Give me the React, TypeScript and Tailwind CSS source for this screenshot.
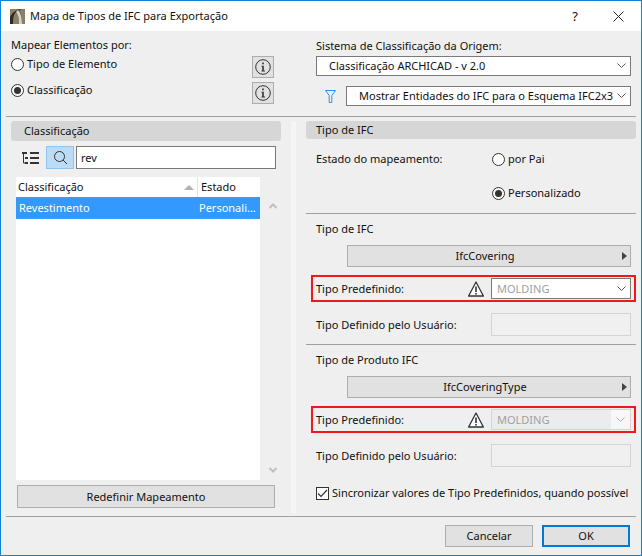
import { ReactNode } from 'react';

const Radio = ({ label, checked = false }: { label: string; checked?: boolean }) => (
  <div className="flex items-center h-[16px]">
    <span className="w-[13px] h-[13px] rounded-full border border-[#333] bg-white flex items-center justify-center shrink-0">
      {checked && <span className="w-[7px] h-[7px] rounded-full bg-[#333]" />}
    </span>
    <span className="ml-[3px]">{label}</span>
  </div>
);

const Chevron = ({ color = "#555" }: { color?: string }) => (
  <svg width="9" height="6" viewBox="0 0 9 6" className="shrink-0">
    <path d="M0.5 0.5 L4.5 4.5 L8.5 0.5" fill="none" stroke={color} strokeWidth="1" />
  </svg>
);

const Select = ({ children, className }: { children: ReactNode; className: string }) => (
  <div className={`flex items-center justify-between bg-white border border-[#7a7a7a] ${className}`}>
    {children}
    <span className="mr-[4px]"><Chevron /></span>
  </div>
);

const InfoButton = () => (
  <div className="w-[22px] h-[22px] border border-[#adadad] bg-[#e1e1e1] flex items-center justify-center">
    <svg width="16" height="16" viewBox="0 0 16 16">
      <circle cx="8" cy="8" r="7.3" fill="none" stroke="#333" strokeWidth="1" />
      <rect x="7.2" y="3.5" width="1.6" height="1.8" fill="#333" />
      <path d="M6.5 6.8 H8.8 V11.5 H10 V12.5 H6.5 V11.5 H7.2 V7.8 H6.5 Z" fill="#333" />
    </svg>
  </div>
);

const WideButton = ({ label }: { label: string }) => (
  <div className="ml-[41px] w-[284px] h-[22px] border border-[#adadad] bg-[#e1e1e1] flex items-center">
    <span className="flex-1 text-center">{label}</span>
    <span className="w-0 h-0 mr-[3px] border-y-[4px] border-y-transparent border-l-[5px] border-l-[#444]" />
  </div>
);

const Warning = () => (
  <svg width="16" height="16" viewBox="0 0 16 16" className="shrink-0">
    <path d="M8 1 L15.4 15 L0.6 15 Z" fill="#fff" stroke="#333" strokeWidth="1.3" strokeLinejoin="round" />
    <rect x="7.2" y="5.5" width="1.6" height="5.5" fill="#333" />
    <rect x="7.2" y="12" width="1.6" height="1.6" fill="#333" />
  </svg>
);

const Predefined = ({ disabled = false, className = "" }: { disabled?: boolean; className?: string }) => (
  <div className={`ml-[5px] w-[325px] h-[27px] border-2 border-[#f01818] flex items-center ${className}`}>
    <span className="ml-[3px] w-[152px] pt-[1px]">Tipo Predefinido:</span>
    <Warning />
    <div className={`ml-[7px] w-[140px] h-[21px] flex items-center justify-between ${disabled ? "border border-[#d4d4d4] bg-[#ececec]" : "border border-[#7a7a7a] bg-white"}`}>
      <span className="ml-[5px] text-[#a0a0a0]">MOLDING</span>
      {disabled
        ? <span className="w-[19px] h-full bg-[#f7f7f7] flex items-center justify-center"><Chevron color="#b0b0b0" /></span>
        : <span className="mr-[4px]"><Chevron /></span>}
    </div>
  </div>
);

const UserDefined = () => (
  <div className="ml-[10px] flex items-center h-[23px]">
    <span className="w-[175px]">Tipo Definido pelo Usuário:</span>
    <div className="w-[140px] h-[23px] border border-[#d4d4d4] bg-[#f0f0f0]" />
  </div>
);

const Separator = ({ className = "" }: { className?: string }) => <div className={`h-px bg-[#a0a0a0] ${className}`} />;

export default function App() {
  return (
    <div
      className="w-[642px] h-[556px] border border-[#0a84d8] bg-[#efefef] text-[#111] text-[11px] leading-[16px] flex flex-col overflow-hidden"
      style={{ fontFamily: '"Noto Sans", sans-serif' }}
    >
      <div className="h-[30px] bg-white flex items-center shrink-0">
        <svg width="15" height="15" viewBox="0 0 15 15" className="ml-[9px] shrink-0">
          <rect width="15" height="15" fill="#8a7f68" />
          <path d="M0 15 L0 8 C3 2 8 0 15 0 L8 0 C11 3 12 9 12 15 L9 15 C9 9 8 5 6 3 C3 6 3 11 3 15 Z" fill="#2f2a22" />
          <path d="M9 15 C9 9 8 5 6 3 L8 1 C11 4 12 9 12 15 Z" fill="#d8d2c0" />
        </svg>
        <span className="ml-[5px]">Mapa de Tipos de IFC para Exportação</span>
        <span className="ml-auto text-[13px] mr-[35px]">?</span>
        <svg width="11" height="11" viewBox="0 0 11 11" className="mr-[17px]">
          <path d="M0.5 0.5 L10.5 10.5 M10.5 0.5 L0.5 10.5" stroke="#222" strokeWidth="1" />
        </svg>
      </div>

      <div className="h-[85px] flex shrink-0">
        <div className="w-[305px] flex shrink-0">
          <div className="ml-[10px] w-[240px]">
            <div className="mt-[6px]">Mapear Elementos por:</div>
            <div className="mt-[3px]"><Radio label="Tipo de Elemento" /></div>
            <div className="mt-[10px]"><Radio label="Classificação" checked /></div>
          </div>
          <div className="ml-[1px] pt-[25px] flex flex-col gap-[4px]">
            <InfoButton />
            <InfoButton />
          </div>
        </div>
        <div className="flex-1 min-w-0">
          <div className="mt-[7px] ml-[10px]">Sistema de Classificação da Origem:</div>
          <Select className="mt-[2px] ml-[10px] w-[315px] h-[20px]"><span className="ml-[12px]">Classificação ARCHICAD - v 2.0</span></Select>
          <div className="mt-[10px] flex items-center">
            <svg width="11" height="13" viewBox="0 0 11 13" className="ml-[19px]">
              <path d="M0.5 0.5 H10.5 L6.8 5.5 V12.5 H4.2 V5.5 Z" fill="none" stroke="#2f8cf0" strokeWidth="1" />
            </svg>
            <Select className="ml-[10px] w-[285px] h-[20px]"><span className="ml-[12px] whitespace-nowrap">Mostrar Entidades do IFC para o Esquema IFC2x3</span></Select>
          </div>
        </div>
      </div>

      <Separator className="ml-[5px] mr-[5px] shrink-0" />

      <div className="h-[399px] flex shrink-0">
        <div className="w-[290px] shrink-0 pt-[4px]">
          <div className="ml-[10px] w-[270px] h-[20px] rounded-[3px] bg-[#d6d6d6] pl-[13px] flex items-center">Classificação</div>
          <div className="mt-[5px] ml-[10px] flex items-center">
            <svg width="17" height="12" viewBox="0 0 17 12" className="ml-[11px]">
              <path d="M0 1 H5 M8 1 H17 M8 6 H17 M8 11 H17 M3 6 H6 M3 11 H6" stroke="#333" strokeWidth="2" fill="none" />
              <path d="M1.5 2 V11 H3" stroke="#333" strokeWidth="1" fill="none" />
            </svg>
            <div className="ml-[7px] w-[28px] h-[23px] bg-[#bcdcf5] border border-[#8ec4ee] flex items-center justify-center">
              <svg width="15" height="15" viewBox="0 0 15 15">
                <circle cx="6.5" cy="6.5" r="5" fill="none" stroke="#333" strokeWidth="1" />
                <path d="M10 10 L14 14" stroke="#333" strokeWidth="1" />
              </svg>
            </div>
            <div className="ml-[2px] w-[200px] h-[23px] bg-white border border-[#7a7a7a] pl-[4px] flex items-center">rev</div>
          </div>
          <div className="mt-[8px] ml-[15px] flex">
            <div className="w-[244px] h-[303px] bg-white">
              <div className="h-[20px] flex items-center">
                <span className="ml-[2px] w-[166px]">Classificação</span>
                <span className="w-0 h-0 border-x-[5px] border-x-transparent border-b-[5px] border-b-[#b0b0b0] mr-[2px]" />
                <span className="w-px h-[20px] bg-[#e4e4e4] mx-[1px]" />
                <span className="ml-[2px]">Estado</span>
              </div>
              <div className="h-[22px] bg-[#3399ff] text-white flex items-center whitespace-nowrap">
                <span className="ml-[3px] w-[180px]">Revestimento</span>
                <span>Personali...</span>
              </div>
            </div>
            <div className="w-[20px] h-[303px] flex flex-col items-center justify-between pt-[26px] pb-[7px] pl-[5px]">
              <svg width="8" height="6" viewBox="0 0 8 6"><path d="M0.5 5 L4 1.5 L7.5 5" fill="none" stroke="#c0c0c0" strokeWidth="2" /></svg>
              <svg width="8" height="6" viewBox="0 0 8 6"><path d="M0.5 1 L4 4.5 L7.5 1" fill="none" stroke="#c0c0c0" strokeWidth="2" /></svg>
            </div>
          </div>
          <div className="mt-[5px] ml-[16px] w-[258px] h-[23px] border border-[#adadad] bg-[#e1e1e1] flex items-center justify-center">Redefinir Mapeamento</div>
        </div>

        <div className="w-[5px] h-[392px] shrink-0 bg-[#f5f5f5] mt-[4px]" />

        <div className="flex-1 min-w-0 pt-[4px] pl-[10px]">
          <div className="w-[330px] h-[18px] rounded-[3px] bg-[#d6d6d6] pl-[10px] flex items-center">Tipo de IFC</div>
          <div className="mt-[12px] h-[16px] flex items-center ml-[10px]">
            <span className="w-[176px]">Estado do mapeamento:</span>
            <Radio label="por Pai" />
          </div>
          <div className="mt-[18px] ml-[186px]"><Radio label="Personalizado" checked /></div>
          <Separator className="mt-[12px] w-[330px]" />
          <div className="mt-[7px] ml-[10px]">Tipo de IFC</div>
          <div className="mt-[8px]"><WideButton label="IfcCovering" /></div>
          <Predefined className="mt-[8px]" />
          <div className="mt-[11px]"><UserDefined /></div>
          <Separator className="mt-[8px] w-[330px]" />
          <div className="mt-[7px] ml-[10px]">Tipo de Produto IFC</div>
          <div className="mt-[8px]"><WideButton label="IfcCoveringType" /></div>
          <Predefined disabled className="mt-[8px]" />
          <div className="mt-[11px]"><UserDefined /></div>
          <div className="mt-[18px] ml-[10px] flex items-center h-[16px]">
            <span className="w-[13px] h-[13px] border border-[#333] bg-white flex items-center justify-center shrink-0">
              <svg width="11" height="9" viewBox="0 0 11 9"><path d="M1 4.5 L4 7.5 L10 1" fill="none" stroke="#333" strokeWidth="1.2" /></svg>
            </span>
            <span className="ml-[3px] whitespace-nowrap">Sincronizar valores de Tipo Predefinidos, quando possível</span>
          </div>
        </div>
      </div>

      <Separator className="ml-[5px] mr-[5px] shrink-0" />

      <div className="flex justify-end mt-[8px] mr-[11px] gap-[9px]">
        <div className="w-[88px] h-[22px] border border-[#adadad] bg-[#e1e1e1] flex items-center justify-center">Cancelar</div>
        <div className="w-[88px] h-[22px] border-2 border-[#0078d7] bg-[#e1e1e1] flex items-center justify-center">OK</div>
      </div>
    </div>
  );
}
